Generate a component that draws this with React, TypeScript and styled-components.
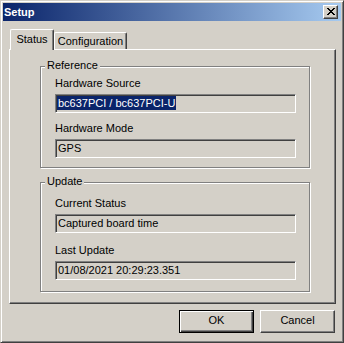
import React from "react";
import styled, { createGlobalStyle } from "styled-components";

const GlobalStyle = createGlobalStyle`
  html, body { margin: 0; padding: 0; background: #d4d0c8; }
  body {
    font-family: "Liberation Sans", Arial, sans-serif;
    font-size: 11px;
    color: #000;
  }
  * { box-sizing: border-box; }
`;

const Window = styled.div`
  width: 344px;
  height: 343px;
  display: flex;
  flex-direction: column;
  padding: 2px;
  background: #d4d0c8;
  border: 1px solid;
  border-color: #d4d0c8 #404040 #404040 #d4d0c8;
  box-shadow: inset 1px 1px 0 #fff, inset -1px -1px 0 #808080;
`;

const TitleBar = styled.div`
  height: 18px;
  flex: none;
  display: flex;
  align-items: center;
  justify-content: space-between;
  padding: 0 3px 0 1px;
  background: linear-gradient(to right, #0a246a, #a6caf0);
`;

const Title = styled.span`
  color: #fff;
  font-weight: bold;
  font-size: 11px;
  line-height: 13px;
`;

const CloseButton = styled.div`
  width: 15px;
  height: 14px;
  display: flex;
  align-items: center;
  justify-content: center;
  padding: 0 0 1px 1px;
  background: #d4d0c8;
  border: 1px solid;
  border-color: #fff #404040 #404040 #fff;
  box-shadow: inset -1px -1px 0 #808080;
`;

const Body = styled.div`
  flex: 1;
  display: flex;
  flex-direction: column;
  padding: 8px 5px 7px 6px;
`;

const TabRow = styled.div`
  height: 20px;
  flex: none;
  display: flex;
  align-items: flex-end;
  margin-left: 1px;
`;

const Tab = styled.div<{ $active?: boolean; $w: number }>`
  position: relative;
  z-index: ${(p) => (p.$active ? 1 : 0)};
  width: ${(p) => p.$w}px;
  height: ${(p) => (p.$active ? 21 : 17)}px;
  margin-bottom: ${(p) => (p.$active ? -1 : 0)}px;
  padding-top: ${(p) => (p.$active ? 3 : 2)}px;
  text-align: center;
  line-height: 13px;
  background: #d4d0c8;
  border-top: 1px solid #fff;
  border-left: 1px solid #fff;
  border-right: 1px solid #404040;
  border-top-left-radius: 2px;
  border-top-right-radius: 2px;
  box-shadow: inset -1px 0 0 #808080;
`;

const Panel = styled.div`
  height: 255px;
  flex: none;
  display: flex;
  flex-direction: column;
  padding: 16px 0 0 30px;
  border: 1px solid;
  border-color: #fff #404040 #404040 #fff;
  box-shadow: inset -1px -1px 0 #808080;
`;

const Group = styled.div<{ $pt: number; $pb: number; $mt?: number }>`
  position: relative;
  width: 270px;
  margin-top: ${(p) => p.$mt ?? 0}px;
  display: flex;
  flex-direction: column;
  padding: ${(p) => p.$pt}px 13px ${(p) => p.$pb}px 14px;
  border: 1px solid #808080;
  box-shadow: 1px 1px 0 #fff, inset 1px 1px 0 #fff;
`;

const Legend = styled.span`
  position: absolute;
  top: -8px;
  left: 4px;
  padding: 0 2px;
  line-height: 13px;
  background: #d4d0c8;
`;

const Label = styled.div<{ $mt?: number }>`
  line-height: 13px;
  margin-top: ${(p) => p.$mt ?? 0}px;
  white-space: nowrap;
`;

const Field = styled.div`
  height: 19px;
  margin-top: 4px;
  padding: 1px 1px 0 1px;
  line-height: 15px;
  white-space: nowrap;
  overflow: hidden;
  background: #d4d0c8;
  border: 1px solid;
  border-color: #808080 #fff #fff #808080;
  box-shadow: inset 1px 1px 0 #404040, inset -1px -1px 0 #d4d0c8;
`;

const Value = styled.span<{ $selected?: boolean }>`
  display: inline-block;
  vertical-align: top;
  padding: 0 1px;
  line-height: ${(p) => (p.$selected ? 14 : 15)}px;
  background: ${(p) => (p.$selected ? "#0a246a" : "transparent")};
  color: ${(p) => (p.$selected ? "#fff" : "#000")};
`;

const ButtonRow = styled.div`
  display: flex;
  justify-content: flex-end;
  gap: 6px;
  margin-top: 6px;
  padding-right: 1px;
`;

const Button = styled.button<{ $default?: boolean }>`
  width: 75px;
  height: 23px;
  margin: 0;
  padding: 0 0 2px 0;
  font-family: "Liberation Sans", Arial, sans-serif;
  font-size: 11px;
  line-height: 13px;
  color: #000;
  background: #d4d0c8;
  border: 1px solid;
  border-color: ${(p) => (p.$default ? "#000" : "#fff #404040 #404040 #fff")};
  box-shadow: ${(p) =>
    p.$default
      ? "inset 1px 1px 0 #fff, inset -1px -1px 0 #404040, inset -2px -2px 0 #808080"
      : "inset -1px -1px 0 #808080"};
`;

const XIcon = () => (
  <svg width="8" height="7" viewBox="0 0 8 7" shapeRendering="crispEdges">
    <path
      fill="#000"
      d="M0 0h2v1H0z M6 0h2v1H6z M1 1h2v1H1z M5 1h2v1H5z M2 2h4v1H2z M3 3h2v1H3z M2 4h4v1H2z M1 5h2v1H1z M5 5h2v1H5z M0 6h2v1H0z M6 6h2v1H6z"
    />
  </svg>
);

export default function App() {
  return (
    <>
      <GlobalStyle />
      <Window>
        <TitleBar>
          <Title>Setup</Title>
          <CloseButton>
            <XIcon />
          </CloseButton>
        </TitleBar>
        <Body>
          <TabRow>
            <Tab $active $w={44}>Status</Tab>
            <Tab $w={73}>Configuration</Tab>
          </TabRow>
          <Panel>
            <Group $pt={10} $pb={9}>
              <Legend>Reference</Legend>
              <Label>Hardware Source</Label>
              <Field>
                <Value $selected>bc637PCI / bc637PCI-U</Value>
              </Field>
              <Label $mt={9}>Hardware Mode</Label>
              <Field>
                <Value>GPS</Value>
              </Field>
            </Group>
            <Group $pt={14} $pb={11} $mt={14}>
              <Legend>Update</Legend>
              <Label>Current Status</Label>
              <Field>
                <Value>Captured board time</Value>
              </Field>
              <Label $mt={11}>Last Update</Label>
              <Field>
                <Value>01/08/2021 20:29:23.351</Value>
              </Field>
            </Group>
          </Panel>
          <ButtonRow>
            <Button $default>OK</Button>
            <Button>Cancel</Button>
          </ButtonRow>
        </Body>
      </Window>
    </>
  );
}
